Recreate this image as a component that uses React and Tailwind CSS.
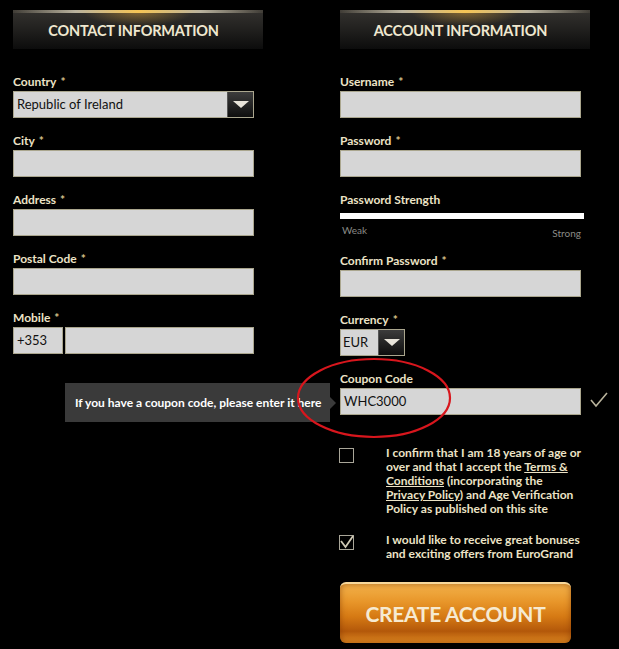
import React from 'react';

const font = { fontFamily: 'Lato, "Open Sans", sans-serif' };

function SectionHeader({ children }) {
  return (
    <div className="relative h-[39px] w-[250px] bg-[linear-gradient(to_bottom,#34322f_0%,#232220_45%,#0c0c0c_100%)] flex items-center justify-center pr-[9px]">
      <div className="absolute top-[2px] left-[70px] right-[70px] h-[14px] bg-[radial-gradient(ellipse_at_top,rgba(230,170,60,0.45),transparent_70%)]" />
      <div className="absolute top-0 left-0 right-0 h-[3px] bg-[linear-gradient(to_right,rgba(120,110,90,0.2)_0%,#b9b29e_25%,#f6c555_50%,#b9b29e_75%,rgba(120,110,90,0.2)_100%)]" />
      <span className="relative text-[14.5px] font-bold text-[#efe8d0] tracking-[-0.2px] mt-[3px]">{children}</span>
    </div>
  );
}

function Label({ text, star = true }) {
  return (
    <div className="h-[17px] text-[12px] font-bold text-[#ece3c6] leading-[16px]">
      {text}
      {star && <span className="text-[#d8c48c] ml-[4px]">*</span>}
    </div>
  );
}

function Input({ value, className = '' }) {
  return (
    <div className={`h-[27px] bg-[#d6d6d6] border border-[#aaa68e] flex items-center px-[3px] text-[13px] text-[#111] ${className}`}>
      {value}
    </div>
  );
}

function DropBtn() {
  return (
    <div className="h-full w-[26px] bg-[linear-gradient(to_bottom,#3c3c3c,#0e0e0e)] border-l border-[#555] flex items-center justify-center">
      <div className="w-0 h-0 border-l-[8px] border-r-[8px] border-t-[7px] border-l-transparent border-r-transparent border-t-[#e8e4da]" />
    </div>
  );
}

function Field({ label, star, children, mb = 'mb-[15px]' }) {
  return (
    <div className={mb}>
      <Label text={label} star={star} />
      {children}
    </div>
  );
}

export default function App() {
  return (
    <div className="relative w-[619px] h-[649px] bg-black overflow-hidden" style={font}>
      <div className="flex pt-[10px]">
        {/* contact column */}
        <div className="ml-[13px] w-[250px]">
          <SectionHeader>CONTACT INFORMATION</SectionHeader>
          <div className="mt-[25px] w-[241px]">
            <Field label="Country">
              <div className="h-[27px] bg-[#d6d6d6] border border-[#aaa68e] flex items-center justify-between">
                <span className="px-[3px] text-[13px] text-[#111]">Republic of Ireland</span>
                <DropBtn />
              </div>
            </Field>
            <Field label="City"><Input /></Field>
            <Field label="Address"><Input /></Field>
            <Field label="Postal Code"><Input /></Field>
            <Field label="Mobile">
              <div className="flex gap-[2px]">
                <Input value="+353" className="w-[50px]" />
                <Input className="flex-1" />
              </div>
            </Field>
          </div>
        </div>

        {/* account column */}
        <div className="ml-[77px] w-[250px]">
          <SectionHeader>ACCOUNT INFORMATION</SectionHeader>
          <div className="mt-[25px]">
            <div className="w-[241px]">
              <Field label="Username"><Input /></Field>
              <Field label="Password"><Input /></Field>
            </div>
            <div className="h-[16px] text-[12px] font-bold text-[#ece3c6] leading-[16px]">Password Strength</div>
            <div className="mt-[5px] h-[6px] w-[244px] bg-white" />
            <div className="mt-[5px] w-[241px] flex justify-between text-[10px] text-[#8a8a86] leading-[13px]">
              <span className="ml-[2px]">Weak</span>
              <span className="mt-[3px]">Strong</span>
            </div>
            <div className="mt-[13px] w-[241px]">
              <Field label="Confirm Password"><Input /></Field>
              <Field label="Currency">
                <div className="h-[27px] w-[65px] bg-[#d6d6d6] border border-[#aaa68e] flex items-center justify-between">
                  <span className="px-[2px] text-[13px] text-[#111]">EUR</span>
                  <DropBtn />
                </div>
              </Field>
              <Field label="Coupon Code" star={false} mb="mb-0">
                <div className="relative">
                  <Input value="WHC3000" className="border-[#6b9a48]" />
                  <svg className="absolute left-[250px] top-[3px]" width="18" height="18" viewBox="0 0 18 18">
                    <path d="M1 9 L6 15 L17 2" fill="none" stroke="#b9b39c" strokeWidth="1.6" />
                  </svg>
                </div>
              </Field>
            </div>

            <div className="mt-[31px] flex">
              <div className="w-[15px] h-[15px] border border-[#a9a699] shrink-0 mt-[2px] -ml-[1px]" />
              <p className="ml-[32px] whitespace-nowrap text-[12px] font-bold leading-[14px] text-[#ece3c6]">
                I confirm that I am 18 years of age or<br />
                over and that I accept the <span className="underline">Terms &amp;</span><br />
                <span className="underline">Conditions</span> (incorporating the<br />
                <span className="underline">Privacy Policy</span>) and Age Verification<br />
                Policy as published on this site
              </p>
            </div>

            <div className="mt-[17px] flex">
              <div className="relative w-[15px] h-[15px] border border-[#a9a699] shrink-0 mt-[2px] -ml-[1px]">
                <svg className="absolute left-[0px] top-[-1px]" width="14" height="14" viewBox="0 0 14 14">
                  <path d="M1 6 L5.5 12 L13 1" fill="none" stroke="#cfc9b4" strokeWidth="1.8" />
                </svg>
              </div>
              <p className="ml-[32px] whitespace-nowrap text-[12px] font-bold leading-[14px] text-[#ece3c6]">
                I would like to receive great bonuses<br />
                and exciting offers from EuroGrand
              </p>
            </div>

            <button className="mt-[21px] w-[231px] h-[61px] rounded-[6px] border-t-2 border-[#f7d79a] bg-[linear-gradient(to_bottom,#f3b24a_0%,#e8962a_30%,#d67a14_55%,#b3580a_80%,#e08a22_100%)] shadow-[inset_0_0_6px_rgba(120,50,0,0.6)] flex items-center justify-center">
              <span className="text-[21px] font-bold text-[#f6ead2] tracking-[-0.3px]">CREATE ACCOUNT</span>
            </button>
          </div>
        </div>
      </div>

      {/* coupon tooltip */}
      <div className="absolute left-[65px] top-[383px] w-[265px] h-[39px] bg-[#3a3a3a] flex items-center">
        <span className="ml-[10px] text-[12px] font-bold text-white">If you have a coupon code, please enter it here</span>
        <div className="absolute right-[-6px] top-[14px] w-0 h-0 border-t-[6px] border-b-[6px] border-l-[6px] border-t-transparent border-b-transparent border-l-[#3a3a3a]" />
      </div>

      {/* red annotation ellipse */}
      <svg className="absolute left-[290px] top-[355px] pointer-events-none" width="170" height="90" viewBox="0 0 170 90">
        <ellipse cx="84" cy="43" rx="76" ry="39" fill="none" stroke="#d8161d" strokeWidth="2.2" />
      </svg>
    </div>
  );
}
